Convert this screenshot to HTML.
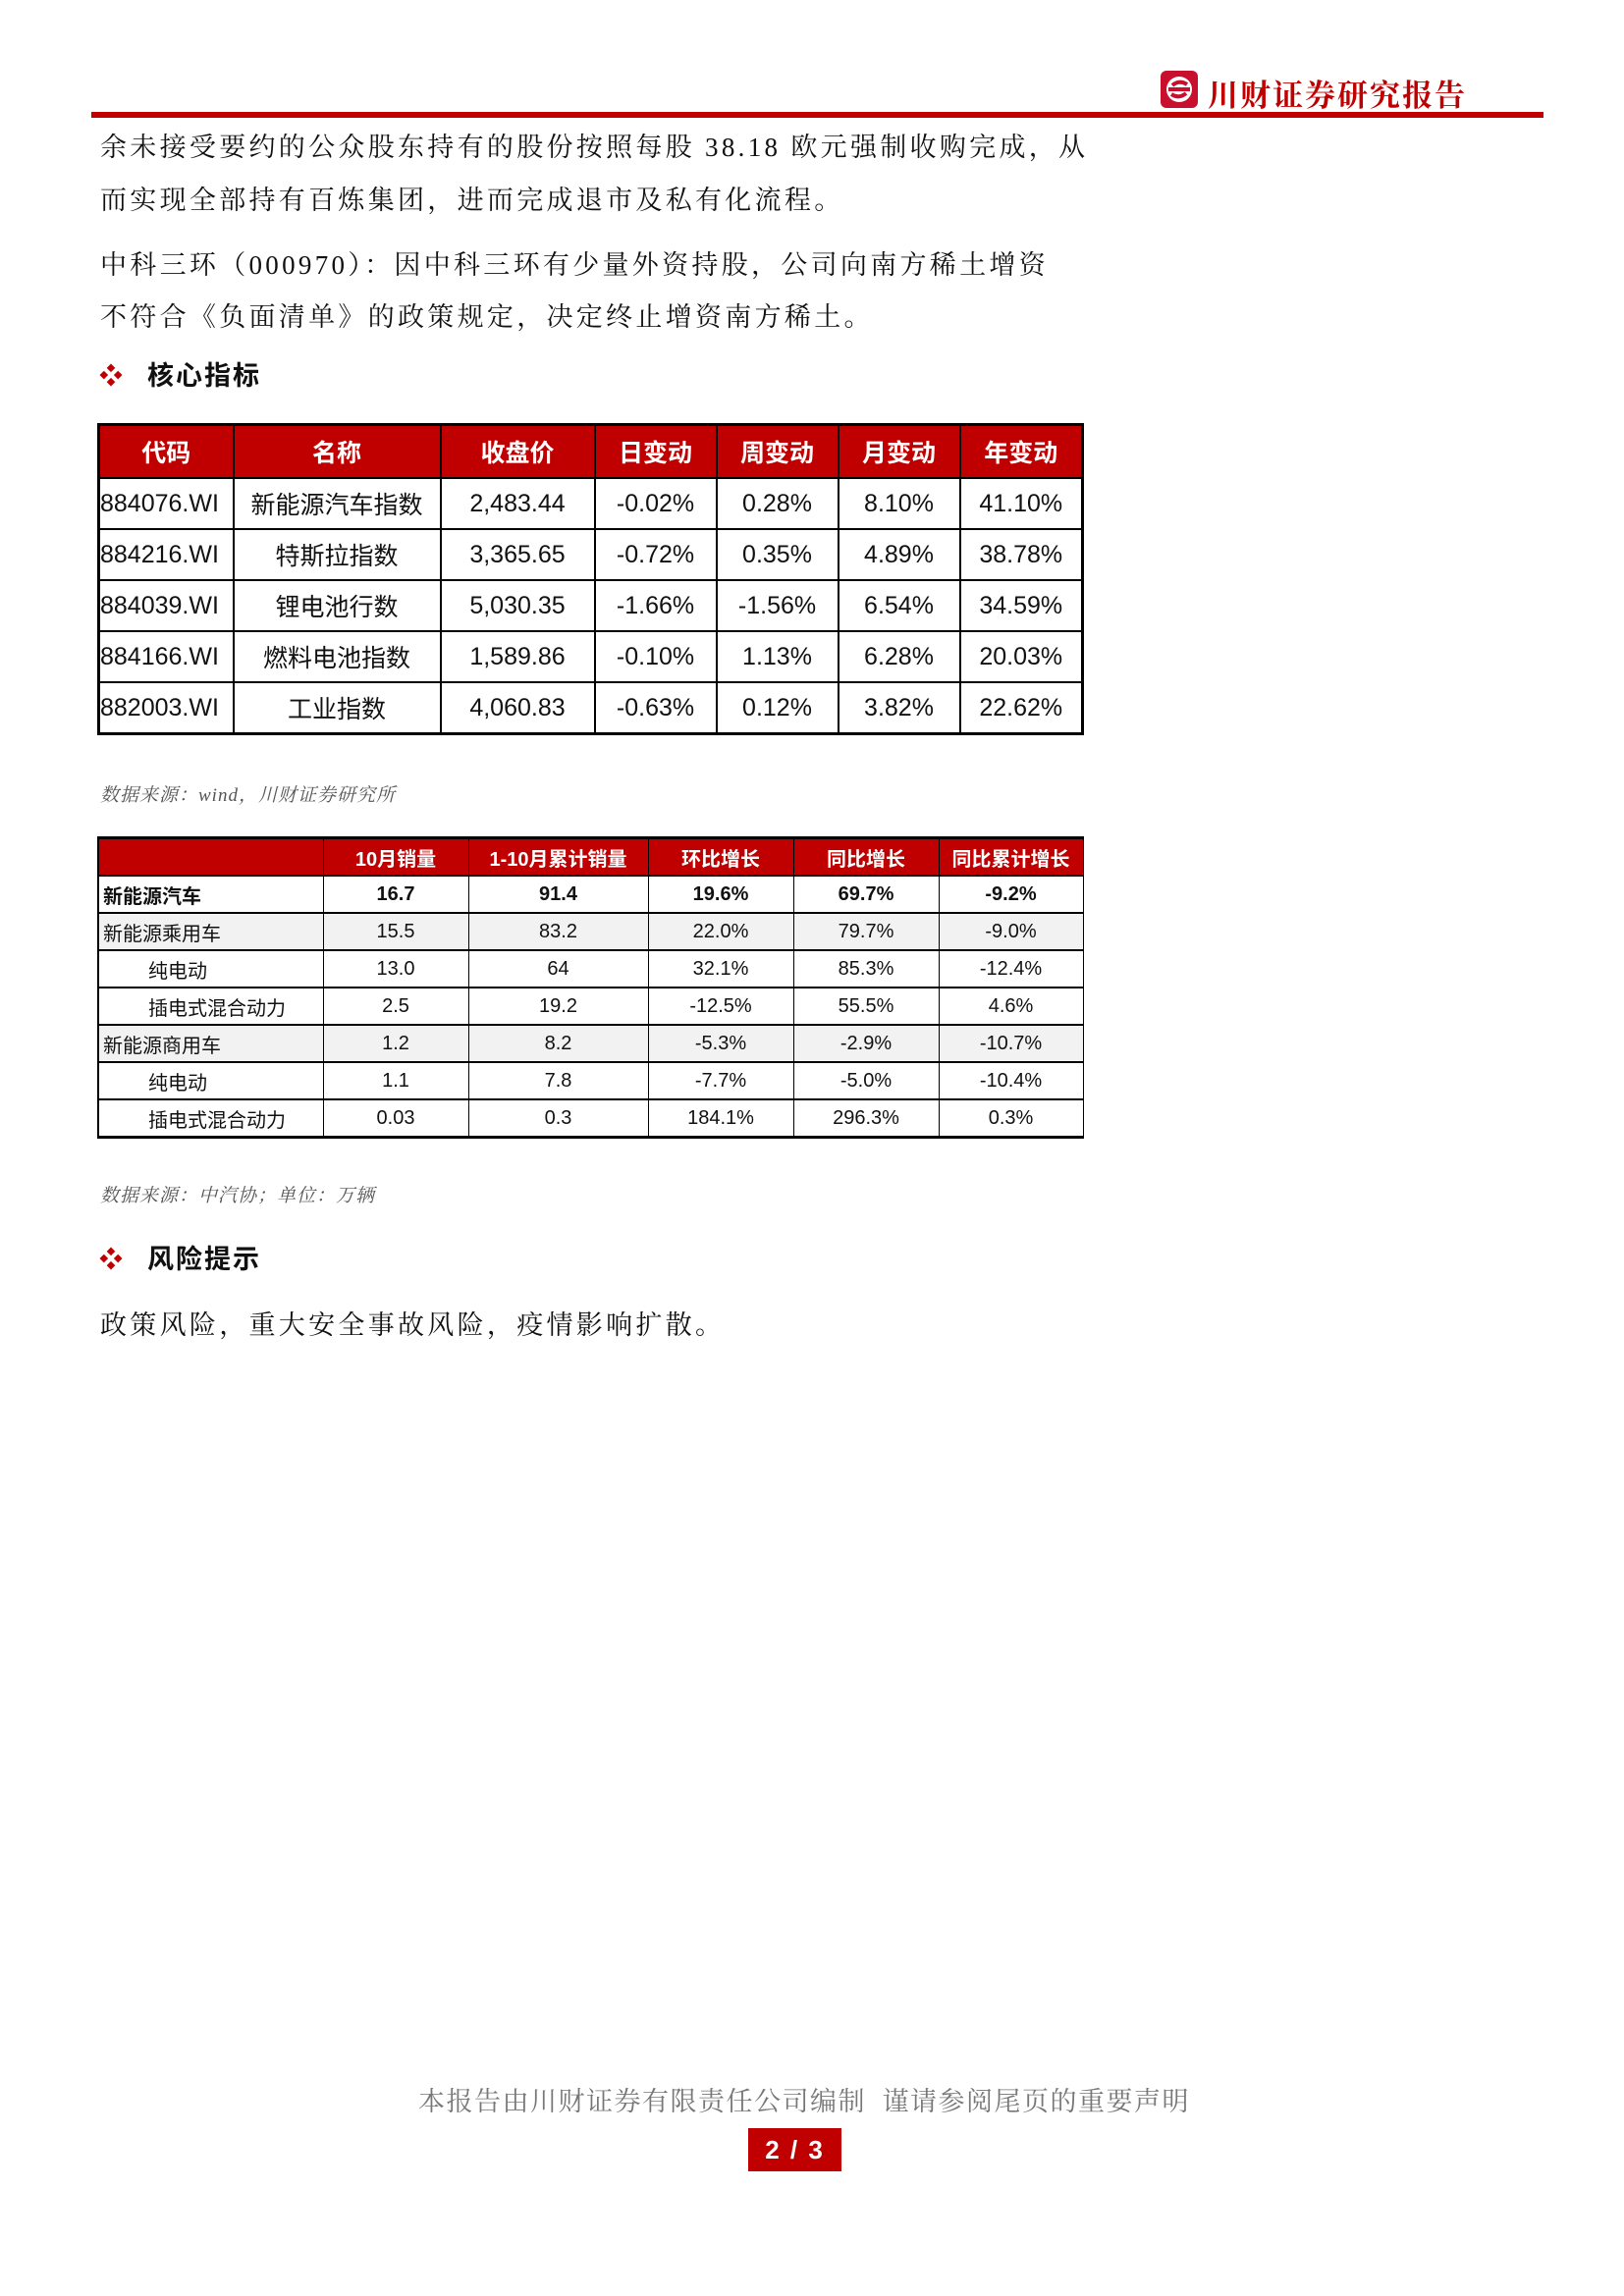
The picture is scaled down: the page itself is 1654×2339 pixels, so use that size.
<!DOCTYPE html>
<html><head><meta charset="utf-8"><style>
body{margin:0;background:#fff;}
#p{position:relative;width:1654px;height:2339px;overflow:hidden;font-family:"Liberation Sans","Noto Serif CJK SC","Noto Sans CJK SC",serif;color:#111;}
.a{position:absolute;white-space:nowrap;}
.t{font-size:27px;font-family:"Liberation Serif","Noto Serif CJK SC",serif;letter-spacing:3.3px;}
.h{font-size:27px;font-weight:bold;font-family:"Liberation Sans","Noto Sans CJK SC",sans-serif;letter-spacing:2px;}
.src{font-size:19px;font-style:italic;color:#555;font-family:"Liberation Serif","Noto Serif CJK SC",serif;letter-spacing:1px;}
table{position:absolute;border-collapse:collapse;table-layout:fixed;font-family:"Liberation Sans","Noto Sans CJK SC",sans-serif;}
#t1{left:99px;top:431px;border:3px solid #000;font-size:25px;}
#t1 td{border:2px solid #000;text-align:center;height:50px;padding:0;white-space:nowrap;overflow:hidden;}
#t1 tr.hd td{background:#c00000;color:#fff;font-weight:bold;height:52px;}
#t2{left:99px;top:852px;font-size:20px;border-left:2px solid #000;border-top:3px solid #000;border-bottom:3px solid #000;}
#t2 td{border:1px solid #000;border-bottom:2px solid #000;text-align:center;height:36px;padding:0;white-space:nowrap;overflow:hidden;}
#t2 tr.hd td{background:#c00000;color:#fff;font-weight:bold;height:36px;}
#t2 tr.g td{background:#f2f2f2;}
#t2 td.l{text-align:left;padding-left:4px;}
#t2 td.i{text-align:left;padding-left:50px;}
</style></head><body><div id="p">
<svg class="a" style="left:1182px;top:72px" width="38" height="38" viewBox="0 0 38 38"><rect x="0" y="0" width="38" height="38" rx="6" fill="#c8102e"/><circle cx="19" cy="19" r="13" fill="#fff"/><path d="M8 19 H30 M12 15 Q19 9 27 14 M11 24 Q19 29 26 23" stroke="#c8102e" stroke-width="4" fill="none"/></svg>
<div class="a" style="left:1230px;top:72px;font-size:31px;color:#c00000;font-family:'Liberation Serif','Noto Serif CJK SC',serif;letter-spacing:2px;font-weight:bold;">川财证券研究报告</div>
<div class="a" style="left:93px;top:114px;width:1479px;height:6px;background:#c00000"></div>

<div class="a t" style="left:102px;top:128px">余未接受要约的公众股东持有的股份按照每股 38.18 欧元强制收购完成，从</div>
<div class="a t" style="left:102px;top:182px">而实现全部持有百炼集团，进而完成退市及私有化流程。</div>
<div class="a t" style="left:102px;top:248px">中科三环（000970）：因中科三环有少量外资持股，公司向南方稀土增资</div>
<div class="a t" style="left:102px;top:301px">不符合《负面清单》的政策规定，决定终止增资南方稀土。</div>

<div class="a" style="left:101px;top:363px;font-size:24px;color:#c00000">❖</div>
<div class="a h" style="left:150px;top:361px">核心指标</div>

<table id="t1" style="width:1002px"><colgroup><col style="width:137px"><col style="width:211px"><col style="width:157px"><col style="width:124px"><col style="width:124px"><col style="width:124px"><col style="width:125px"></colgroup>
<tr class="hd"><td>代码</td><td>名称</td><td>收盘价</td><td>日变动</td><td>周变动</td><td>月变动</td><td>年变动</td></tr>
<tr><td style="text-align:left">884076.WI</td><td>新能源汽车指数</td><td>2,483.44</td><td>-0.02%</td><td>0.28%</td><td>8.10%</td><td>41.10%</td></tr>
<tr><td style="text-align:left">884216.WI</td><td>特斯拉指数</td><td>3,365.65</td><td>-0.72%</td><td>0.35%</td><td>4.89%</td><td>38.78%</td></tr>
<tr><td style="text-align:left">884039.WI</td><td>锂电池行数</td><td>5,030.35</td><td>-1.66%</td><td>-1.56%</td><td>6.54%</td><td>34.59%</td></tr>
<tr><td style="text-align:left">884166.WI</td><td>燃料电池指数</td><td>1,589.86</td><td>-0.10%</td><td>1.13%</td><td>6.28%</td><td>20.03%</td></tr>
<tr><td style="text-align:left">882003.WI</td><td>工业指数</td><td>4,060.83</td><td>-0.63%</td><td>0.12%</td><td>3.82%</td><td>22.62%</td></tr>
</table>

<div class="a src" style="left:102px;top:795px">数据来源：wind，川财证券研究所</div>

<table id="t2" style="width:1003px"><colgroup><col style="width:229px"><col style="width:148px"><col style="width:183px"><col style="width:148px"><col style="width:148px"><col style="width:147px"></colgroup>
<tr class="hd"><td></td><td>10月销量</td><td>1-10月累计销量</td><td>环比增长</td><td>同比增长</td><td>同比累计增长</td></tr>
<tr style="font-weight:bold"><td class="l">新能源汽车</td><td>16.7</td><td>91.4</td><td>19.6%</td><td>69.7%</td><td>-9.2%</td></tr>
<tr class="g"><td class="l">新能源乘用车</td><td>15.5</td><td>83.2</td><td>22.0%</td><td>79.7%</td><td>-9.0%</td></tr>
<tr><td class="i">纯电动</td><td>13.0</td><td>64</td><td>32.1%</td><td>85.3%</td><td>-12.4%</td></tr>
<tr><td class="i">插电式混合动力</td><td>2.5</td><td>19.2</td><td>-12.5%</td><td>55.5%</td><td>4.6%</td></tr>
<tr class="g"><td class="l">新能源商用车</td><td>1.2</td><td>8.2</td><td>-5.3%</td><td>-2.9%</td><td>-10.7%</td></tr>
<tr><td class="i">纯电动</td><td>1.1</td><td>7.8</td><td>-7.7%</td><td>-5.0%</td><td>-10.4%</td></tr>
<tr><td class="i">插电式混合动力</td><td>0.03</td><td>0.3</td><td>184.1%</td><td>296.3%</td><td>0.3%</td></tr>
</table>

<div class="a src" style="left:102px;top:1203px">数据来源：中汽协；单位：万辆</div>

<div class="a" style="left:101px;top:1263px;font-size:24px;color:#c00000">❖</div>
<div class="a h" style="left:150px;top:1261px">风险提示</div>
<div class="a t" style="left:102px;top:1328px">政策风险，重大安全事故风险，疫情影响扩散。</div>

<div class="a" style="left:419px;top:2119px;width:800px;text-align:center;font-size:27px;color:#777;font-family:'Liberation Serif','Noto Serif CJK SC',serif;letter-spacing:1.5px">本报告由川财证券有限责任公司编制&nbsp; 谨请参阅尾页的重要声明</div>
<div class="a" style="left:762px;top:2168px;width:95px;height:44px;background:#c00000;color:#fff;font-weight:bold;font-size:26px;text-align:center;line-height:44px;letter-spacing:2px">2 / 3</div>
</div></body></html>
